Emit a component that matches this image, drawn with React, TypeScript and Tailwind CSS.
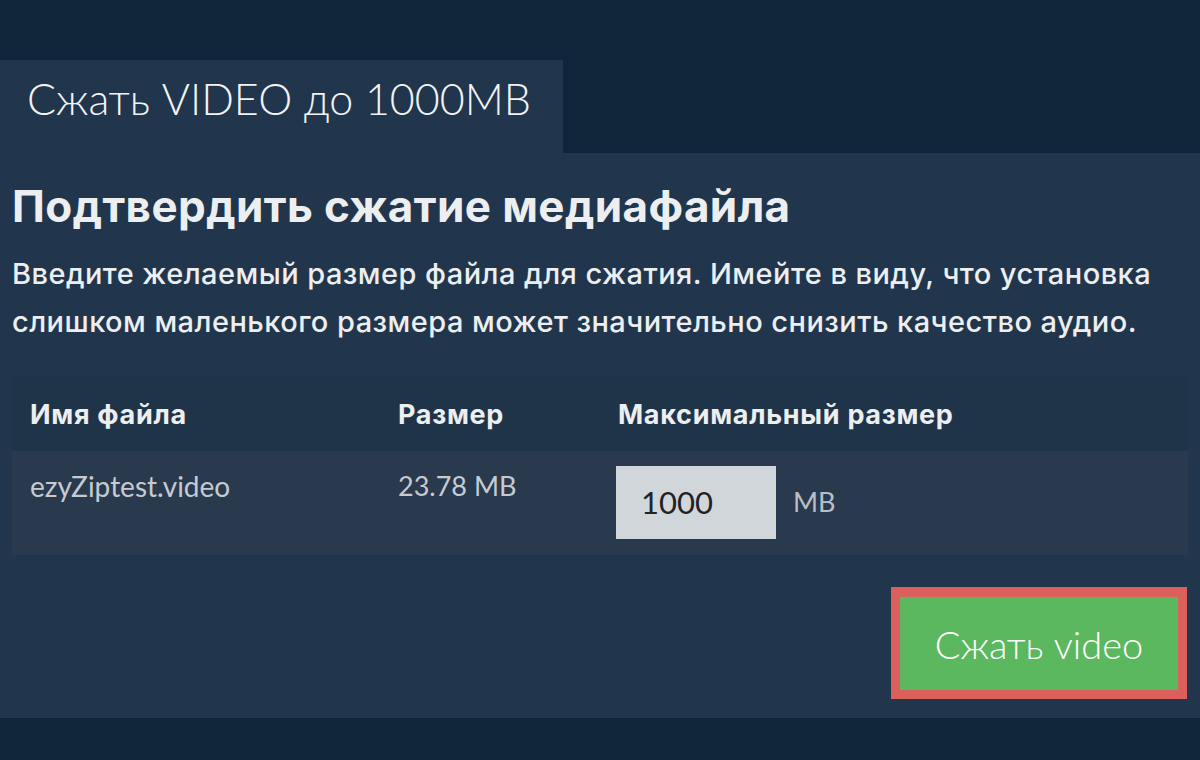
import React from "react";

const inter = { fontFamily: 'Inter, "Noto Sans", sans-serif' };
const lato = { fontFamily: 'Lato, "Noto Sans", sans-serif' };

export default function App() {
  return (
    <div className="w-[1200px] h-[760px] bg-[#10243a] overflow-hidden pt-[60px] text-[#eceef0]" style={lato}>
      <div className="w-[563px] h-[93px] bg-[#21364d] pl-[27px] pt-[17px]">
        <div className="text-[43px] font-light leading-none text-[#f2f3f5]">Сжать VIDEO до 1000MB</div>
      </div>
      <div className="bg-[#21364d] h-[565px] px-[12px] pt-[29px]" style={inter}>
        <h1 className="text-[44px] font-bold leading-[48px] text-[#eceef0] tracking-[0.4px]">Подтвердить сжатие медиафайла</h1>
        <p className="mt-[20px] text-[29px] font-medium leading-[48px] text-[#eceef0] tracking-[0.45px]">
          Введите желаемый размер файла для сжатия. Имейте в виду, что установка<br />слишком маленького размера может значительно снизить качество аудио.
        </p>
        <div className="mt-[31px] w-[1176px]">
          <div className="h-[74px] bg-[#1f3449] flex items-center text-[27px] leading-[33px] font-bold text-[#eceef0] tracking-[0.7px]">
            <div className="w-[386px] pl-[18px]">Имя файла</div>
            <div className="w-[220px]">Размер</div>
            <div>Максимальный размер</div>
          </div>
          <div className="h-[104px] bg-[#2a3a4e] flex text-[#c6cbd2]" style={lato}>
            <div className="w-[386px] pl-[18px] pt-[18px] text-[28px] leading-[34px]">ezyZiptest.video</div>
            <div className="w-[218px] pt-[18px] text-[27px] leading-[34px]">23.78 MB</div>
            <div className="flex items-start pt-[15px]">
              <div className="w-[160px] h-[73px] bg-[#d1d6db] flex items-center pl-[25px] text-[31px] leading-[37px] text-[#1f2328]">1000</div>
              <div className="ml-[17px] mt-[20px] text-[27px] leading-[32px] text-[#b9bfc7]">MB</div>
            </div>
          </div>
        </div>
        <div className="flex justify-end mt-[32px]">
          <div className="w-[296px] h-[112px] bg-[#db605c] px-[9px] pt-[10px] pb-[9px] mr-[1px]">
            <div className="w-full h-full bg-[#5cb85f] flex items-center justify-center text-[38px] leading-none font-light text-white" style={lato}>Сжать video</div>
          </div>
        </div>
      </div>
    </div>
  );
}
